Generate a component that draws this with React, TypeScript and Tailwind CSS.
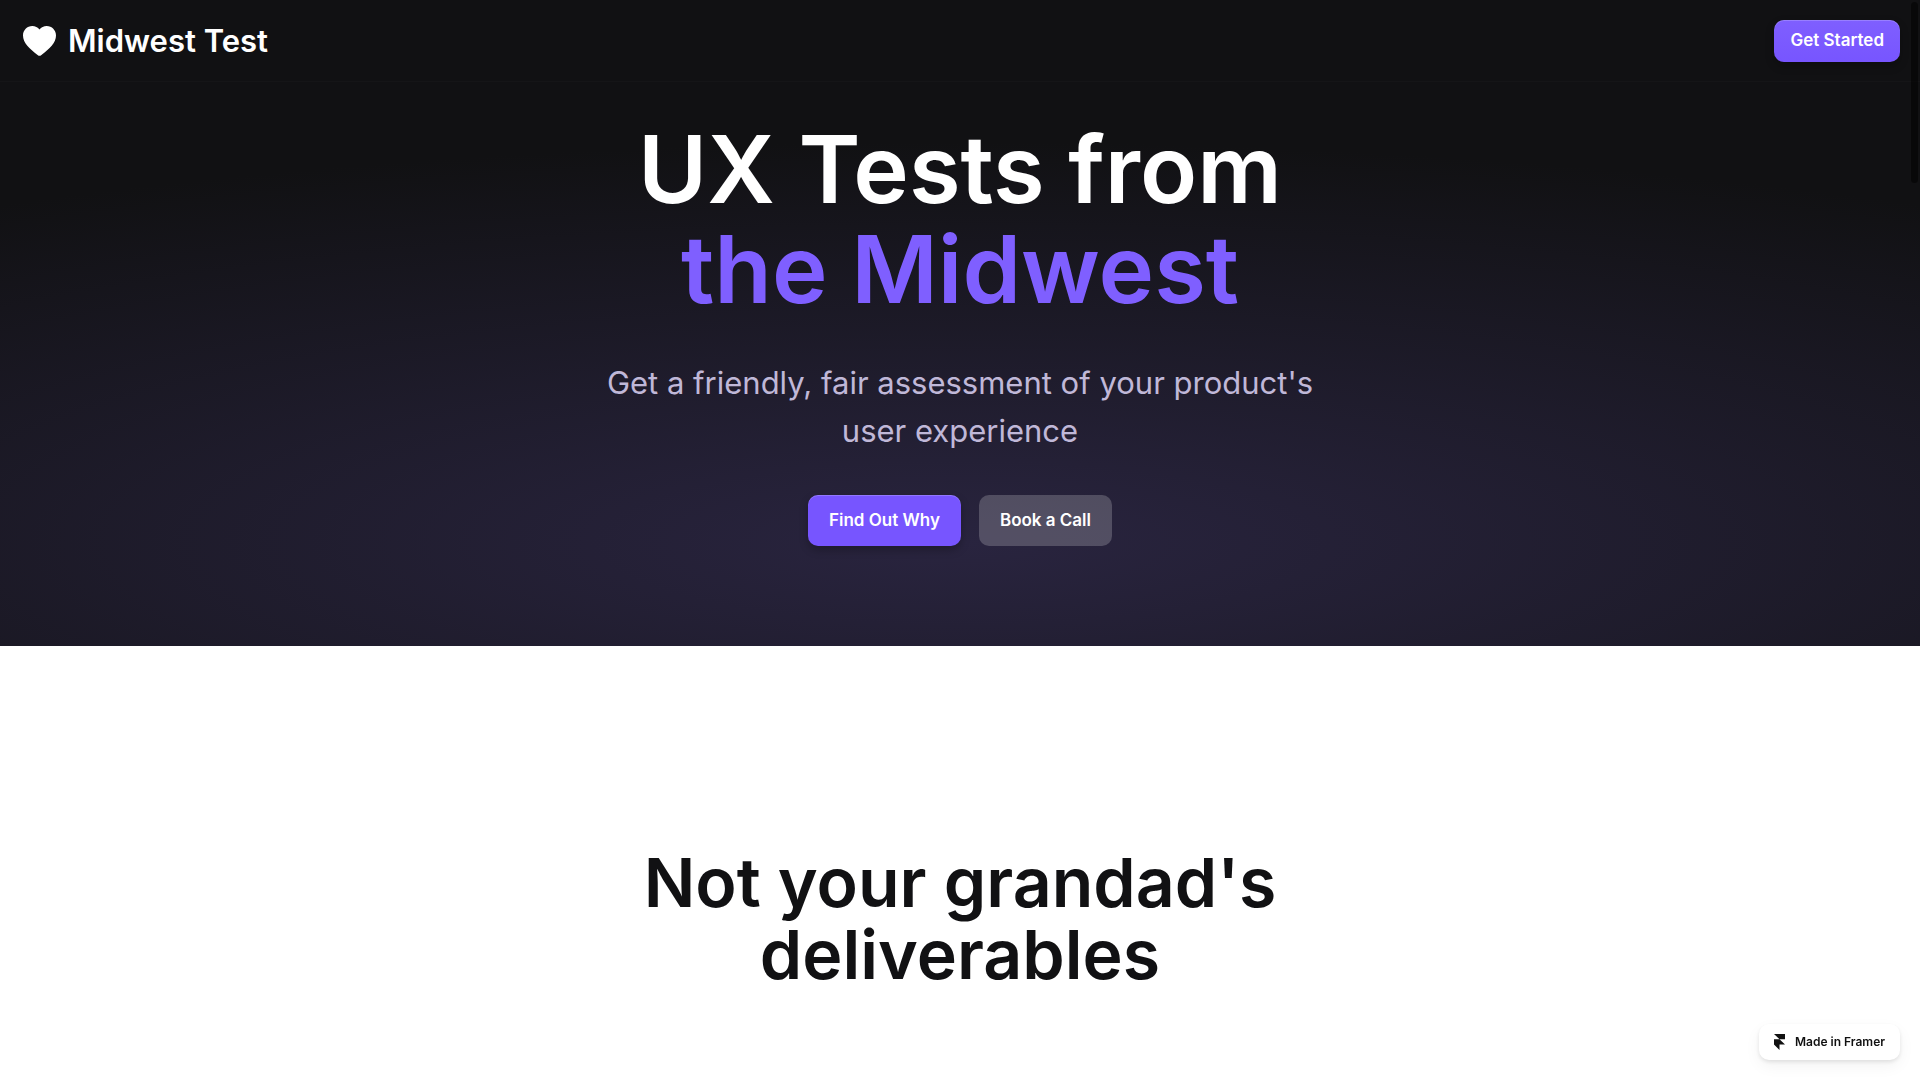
import React from "react";

function HeartIcon() {
  return (
    <svg viewBox="0 0 33 30" className="h-[30px] w-[33px] shrink-0 fill-white" aria-hidden="true">
      <path d="M16.500 3.600C14.800 1.300 12.200 0 9.300 0 4.100 0 0 4.200 0 9.500c0 3.500 1.500 7 4.300 10.300 2.600 3.100 6.100 6 10.600 9.500.9.700 2.300.7 3.200 0 4.500-3.500 8-6.400 10.600-9.500C31.500 16.500 33 13 33 9.500 33 4.200 28.900 0 23.700 0c-2.900 0-5.500 1.300-7.200 3.600z" />
    </svg>
  );
}

function FramerIcon() {
  return (
    <svg viewBox="0 0 11 16" className="h-4 w-[11px] shrink-0 fill-[#111]" aria-hidden="true">
      <path d="M0 0h11v5.300H5.500zM0 5.300h5.500L11 10.600H0zM0 10.600h5.500V16z" />
    </svg>
  );
}

export default function App() {
  return (
    <div className="relative min-h-screen bg-white font-['Inter',sans-serif]">
      <div className="bg-[#111113] bg-[radial-gradient(93%_62%_at_50%_84%,#29243f_0%,#111113_100%)] pb-[100px]">
        <header className="flex items-center justify-between border-b border-white/[0.02] px-5 pt-5 pb-[19px]">
          <a href="#home" className="flex items-center gap-3 pl-[3px] text-white">
            <HeartIcon />
            <span className="text-[31px]/[40px] font-semibold">Midwest Test</span>
          </a>
          <a
            href="#start"
            className="flex h-[42px] items-center rounded-[10px] bg-linear-to-b from-[#7f5fff] to-[#7755ff] px-4 text-[17px] font-semibold text-white shadow-[0_4px_8px_rgba(0,0,0,0.25),inset_0_1px_0_rgba(255,255,255,0.2)]"
          >
            Get Started
          </a>
        </header>
        <main className="mx-auto mt-[37px] flex max-w-[760px] flex-col items-center gap-10 text-center">
          <h1 className="text-[94px]/[100px] font-semibold text-white">
            UX Tests from
            <br />
            <span className="text-[#7f5fff]">the Midwest</span>
          </h1>
          <p className="text-[31px]/[48px] text-[#c0b8d8]">
            Get a friendly, fair assessment of your product's
            <br />
            user experience
          </p>
          <div className="flex gap-[18px]">
            <a
              href="#why"
              className="flex h-[51px] items-center rounded-[10px] bg-[#7755ff] px-[21px] text-[17px] font-semibold text-white shadow-[0_4px_8px_rgba(0,0,0,0.25),inset_0_1px_0_rgba(255,255,255,0.2)]"
            >
              Find Out Why
            </a>
            <a
              href="#call"
              className="flex h-[51px] items-center rounded-[10px] bg-white/20 px-[21px] text-[17px] font-semibold text-white"
            >
              Book a Call
            </a>
          </div>
        </main>
      </div>
      <section className="pt-[200px] pb-20 text-center">
        <h2 className="text-[68px]/[72px] font-semibold text-[#111113]">
          Not your grandad's
          <br />
          deliverables
        </h2>
      </section>
      <a
        href="#framer"
        className="fixed right-5 bottom-5 flex h-9 items-center gap-2.5 rounded-[10px] bg-white px-[15px] text-xs font-semibold text-[#111] shadow-[0_2px_4px_rgba(0,0,0,0.1),0_6px_16px_rgba(0,0,0,0.05)]"
      >
        <FramerIcon />
        Made in Framer
      </a>
      <div className="fixed top-0.5 right-0.5 h-[181px] w-[7px] rounded-full bg-black/50" />
    </div>
  );
}
